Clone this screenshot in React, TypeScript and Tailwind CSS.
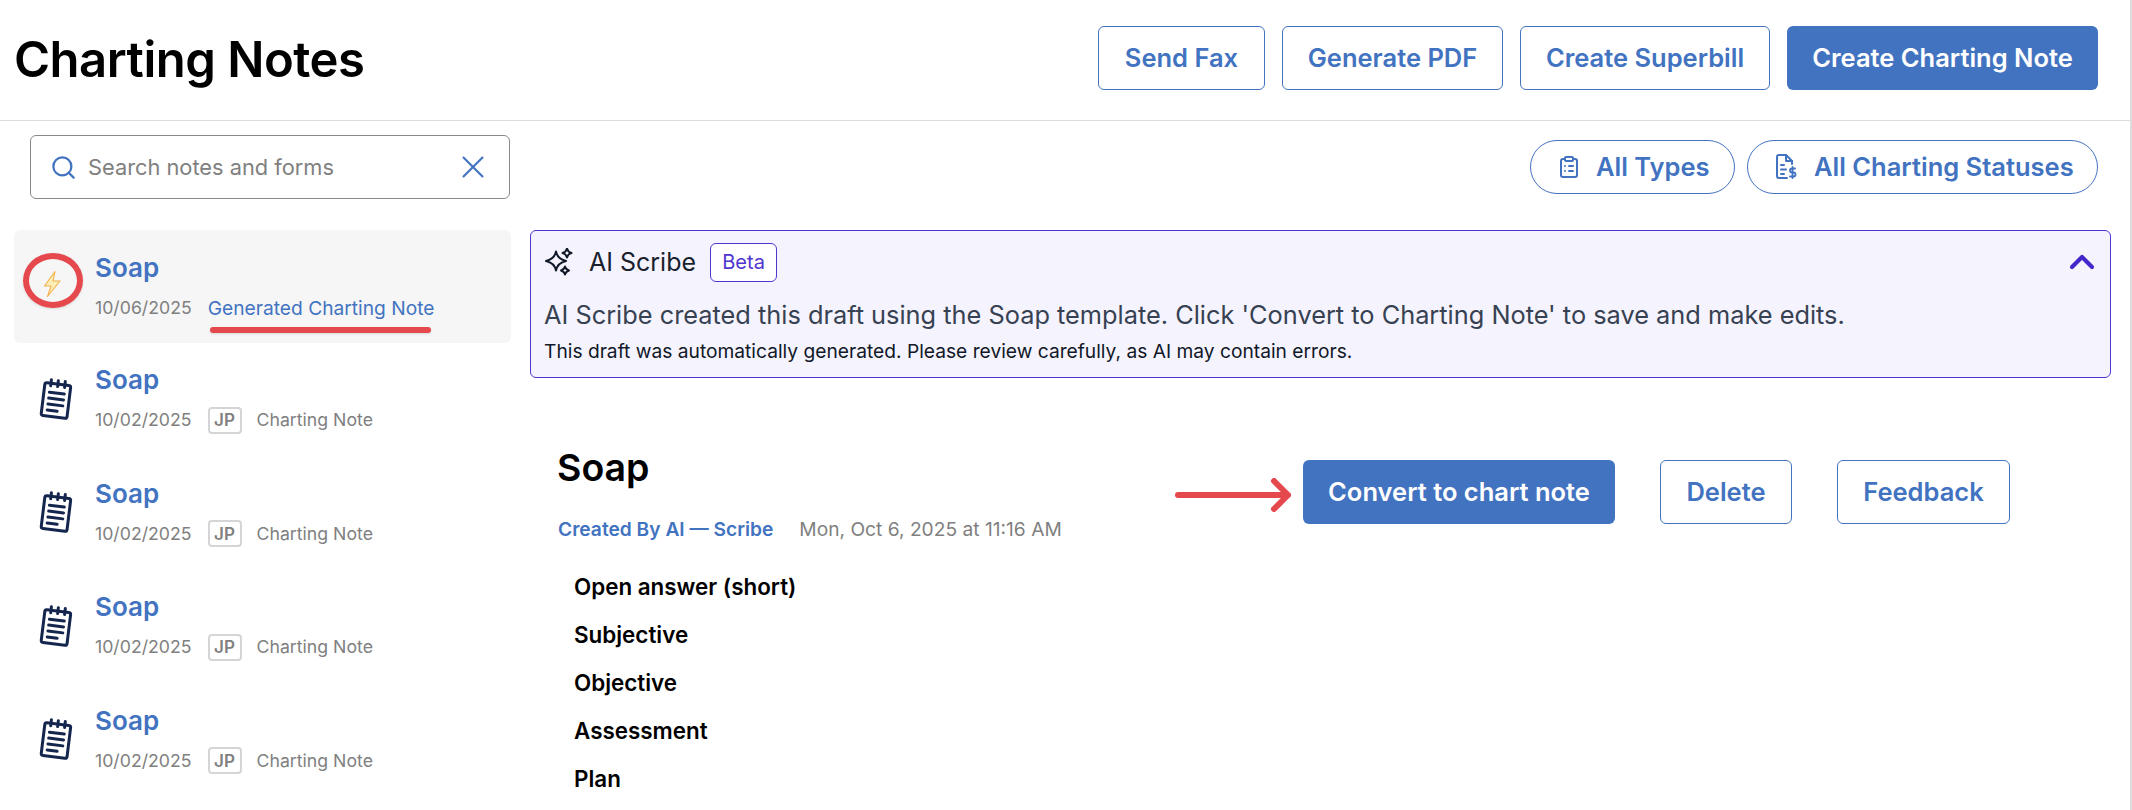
import { ChevronUp, ClipboardList, Search, X } from "lucide-react";

function NotepadIcon() {
  return (
    <svg width="38" height="44" viewBox="0 0 38 44" fill="none" stroke="#14264d" strokeWidth="3" strokeLinecap="round" strokeLinejoin="round">
      <g transform="rotate(7 19 22)">
        <rect x="6" y="6" width="26" height="33" rx="2" />
        <path d="M12 2.5v6M19 2.5v6M26 2.5v6" />
        <path d="M11.5 15h15M11.5 21h15M11.5 27h15M11.5 33h10" />
      </g>
    </svg>
  );
}

function BoltIcon() {
  return (
    <svg width="20" height="28" viewBox="0 0 20 28">
      <path d="M13 1.500 2.500 16h6.500L5.500 26.500 18 11h-7z" fill="#fdeeb8" stroke="#f4b04a" strokeWidth="1.100" strokeLinejoin="round" />
    </svg>
  );
}

function SparkleIcon() {
  return (
    <svg width="28" height="28" viewBox="0 0 28 28" fill="none" stroke="#111827" strokeWidth="2" strokeLinejoin="round">
      <path d="M11 3.500c1 5 3.500 8 10 9.500-6.500 1.500-9 4.500-10 9.500-1-5-3.500-8-10-9.500 6.500-1.500 9-4.500 10-9.500z" />
      <path d="M22 .5c.5 2.500 1.500 3.700 4.500 4.500-3 .8-4 2-4.500 4.500-.5-2.500-1.500-3.700-4.500-4.500 3-.8 4-2 4.500-4.500z" />
      <path d="M20 18.500c.5 2 1.300 3.300 4 4-2.700.7-3.500 2-4 4-.5-2-1.300-3.300-4-4 2.700-.7 3.500-2 4-4z" />
    </svg>
  );
}

function FileDollarIcon() {
  return (
    <svg width="22" height="28" viewBox="0 0 22 28" fill="none" stroke="#4273c1" strokeWidth="2" strokeLinecap="round" strokeLinejoin="round">
      <path d="M12 25H4a2 2 0 0 1-2-2V4a2 2 0 0 1 2-2h7l6 6v3" />
      <path d="M11 2v6h6" />
      <path d="M6 12h3M6 16.500h5M6 21h3" />
      <path d="M20 15.500h-3a1.500 1.500 0 0 0 0 4h1.500a1.500 1.500 0 0 1 0 4H15M17.500 14v11" strokeWidth="1.800" />
    </svg>
  );
}

function OutlineButton({ label, width }: { label: string; width: string }) {
  return (
    <button className={`${width} h-16 rounded-md border border-[#4273c1] bg-white text-[25.500px] font-semibold text-[#4273c1]`}>
      {label}
    </button>
  );
}

function NoteRow({ date }: { date: string }) {
  return (
    <div className="flex h-[113.500px] items-center">
      <div className="flex w-[81px] justify-center pl-[2px]">
        <NotepadIcon />
      </div>
      <div className="flex flex-col gap-[10px] pb-[1px]">
        <div className="text-[26px] font-semibold leading-[32px] text-[#4273c1]">Soap</div>
        <div className="flex items-center text-[17.700px] leading-[28px] text-[#808080]">
          <span>{date}</span>
          <span className="ml-4 flex h-[27px] w-[34px] items-center justify-center rounded-[4px] border-2 border-[#d5d5d8] text-[17px] font-semibold">
            JP
          </span>
          <span className="ml-[15px]">Charting Note</span>
        </div>
      </div>
    </div>
  );
}

export default function App() {
  return (
    <div className="relative h-[810px] w-[2132px] overflow-hidden border-r-2 border-[#dcdcdc] bg-white font-['Inter',sans-serif]">
      <header className="flex h-[121px] items-center justify-between border-b-[1.500px] border-[#dcdcdc] pb-1 pl-[14px] pr-[32px]">
        <h1 className="pt-[2px] text-[49px] font-semibold leading-none tracking-[-0.5px] text-black">Charting Notes</h1>
        <div className="flex gap-[17px]">
          <OutlineButton label="Send Fax" width="w-[167px]" />
          <OutlineButton label="Generate PDF" width="w-[221px]" />
          <OutlineButton label="Create Superbill" width="w-[250px]" />
          <button className="h-16 w-[311px] rounded-md bg-[#4273c1] text-[25.500px] font-semibold text-white">
            Create Charting Note
          </button>
        </div>
      </header>

      <div className="flex items-center justify-between pl-[30px] pr-[32px] pt-[14px]">
        <div className="flex h-16 w-[480px] items-center rounded-md border border-[#8a8a8a] pl-[19px] pr-[17px]">
          <Search className="text-[#4273c1]" size={27} strokeWidth={2} />
          <span className="ml-[11px] flex-1 text-[21.800px] text-[#808080]">Search notes and forms</span>
          <X className="text-[#4273c1]" size={38} strokeWidth={1.300} />
        </div>
        <div className="flex gap-3">
          <button className="flex h-[54px] w-[205px] items-center rounded-full border border-[#4273c1] pl-[26px] text-[25.500px] font-semibold text-[#4273c1]">
            <ClipboardList size={24} strokeWidth={2} />
            <span className="ml-[15px]">All Types</span>
          </button>
          <button className="flex h-[54px] w-[351px] items-center rounded-full border border-[#4273c1] pl-[27px] text-[25.500px] font-semibold text-[#4273c1]">
            <FileDollarIcon />
            <span className="ml-[17px]">All Charting Statuses</span>
          </button>
        </div>
      </div>

      <div className="mt-[31px] flex pl-[14px]">
        <aside className="w-[497px]">
          <div className="relative flex h-[113px] items-center rounded-md bg-[#f6f6f6]">
            <div className="flex w-[81px] justify-center pb-[6px] pr-[6px]">
              <BoltIcon />
            </div>
            <div className="flex flex-col gap-[10px]">
              <div className="text-[26px] font-semibold leading-[32px] text-[#4273c1]">Soap</div>
              <div className="flex items-center text-[17.700px] leading-[28px] text-[#808080]">
                <span>10/06/2025</span>
                <span className="ml-4 text-[19.200px] text-[#4273c1]">Generated Charting Note</span>
              </div>
            </div>
            {/* red annotation marks */}
            <div className="absolute left-[9px] top-[23px] h-[55px] w-[60px] rounded-[50%] border-[6px] border-[#e5484d] shadow-sm" />
            <div className="absolute left-[196px] top-[97px] h-[6px] w-[221px] rounded-full bg-[#e5484d] shadow-sm" />
          </div>
          <NoteRow date="10/02/2025" />
          <NoteRow date="10/02/2025" />
          <NoteRow date="10/02/2025" />
          <NoteRow date="10/02/2025" />
        </aside>

        <main className="ml-[19px] w-[1581px]">
          <section className="h-[148px] rounded-md border-[1.500px] border-[#4f35cf] bg-[#f4f3fe] pl-[14px] pr-[8px]">
            <div className="flex h-[52px] items-center pt-[10px]">
              <SparkleIcon />
              <span className="ml-[16px] text-[25px] leading-none text-[#1a1f2e]">AI Scribe</span>
              <span className="ml-[14px] flex h-[39px] w-[67px] items-center justify-center rounded-md border border-[#4f35cf] bg-white text-[20px] text-[#4f35cf]">
                Beta
              </span>
              <ChevronUp className="ml-auto text-[#4527c9]" size={40} strokeWidth={2.500} />
            </div>
            <p className="-ml-[1px] mt-[16px] text-[25.350px] leading-[32px] text-[#374151]">
              AI Scribe created this draft using the Soap template. Click 'Convert to Charting Note' to save and make edits.
            </p>
            <p className="-ml-[1px] mt-[8px] text-[19.200px] leading-[24px] text-[#111827]">
              This draft was automatically generated. Please review carefully, as AI may contain errors.
            </p>
          </section>

          <div className="relative flex pl-7 pt-[82px]">
            <div className="w-[745px]">
              <h2 className="-ml-[1px] -mt-4 text-[37.500px] font-semibold leading-[48px] text-black">Soap</h2>
              <div className="mt-[23px] flex text-[19.200px] leading-[28px]">
                <span className="font-semibold text-[#4273c1]">Created By AI — Scribe</span>
                <span className="ml-[26px] text-[#808080]">Mon, Oct 6, 2025 at 11:16 AM</span>
              </div>
              <ul className="mt-[29px] flex flex-col gap-[18px] pl-4 text-[22.400px] font-semibold leading-[30px] text-black">
                <li>Open answer (short)</li>
                <li>Subjective</li>
                <li>Objective</li>
                <li>Assessment</li>
                <li>Plan</li>
              </ul>
            </div>
            <div className="flex h-16 gap-[45px]">
              <button className="h-16 w-[312px] rounded-md bg-[#4273c1] text-[25.500px] font-semibold text-white">
                Convert to chart note
              </button>
              <OutlineButton label="Delete" width="w-[132px]" />
              <OutlineButton label="Feedback" width="w-[173px]" />
            </div>
            {/* red arrow */}
            <svg className="absolute left-[644px] top-[100px]" width="118" height="34" viewBox="0 0 118 34" fill="none" stroke="#e5484d" strokeWidth="6" strokeLinecap="round" strokeLinejoin="round">
              <path d="M4 17h110M100 3l14 14-14 14" />
            </svg>
          </div>
        </main>
      </div>
    </div>
  );
}
